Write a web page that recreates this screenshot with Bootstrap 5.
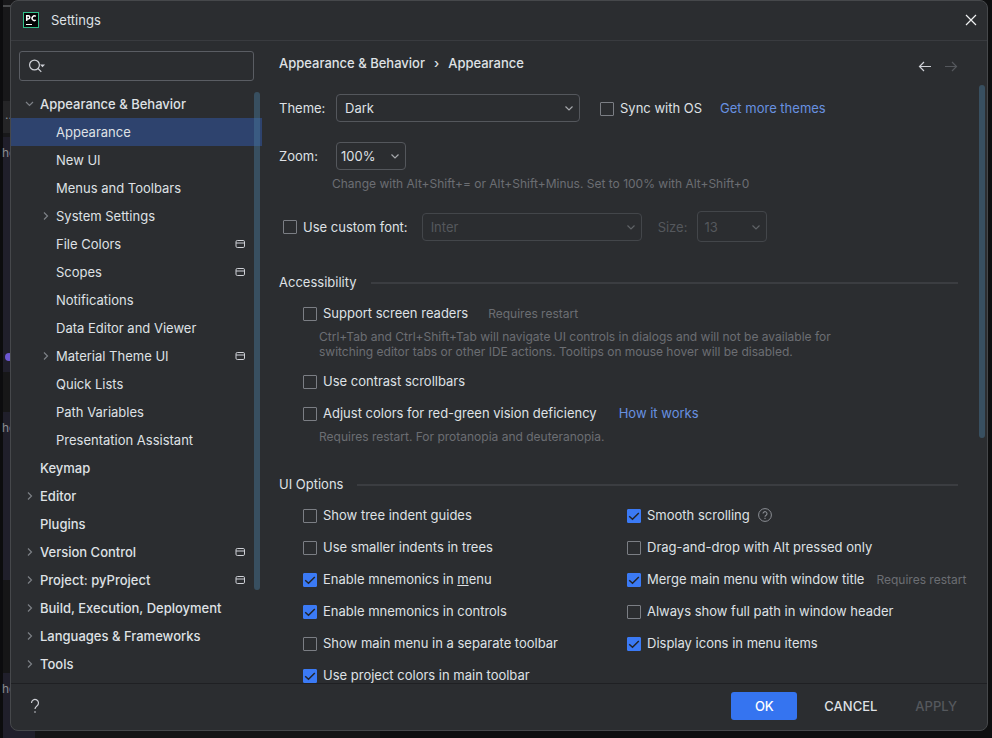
<!DOCTYPE html>
<html lang="en" data-bs-theme="dark">
<head>
<meta charset="utf-8">
<meta name="viewport" content="width=device-width, initial-scale=1">
<title>Settings</title>
<link href="https://cdn.jsdelivr.net/npm/bootstrap@5.3.0/dist/css/bootstrap.min.css" rel="stylesheet">
<style>
  :root { --pane: #2b2d30; --ink: #dfe1e5; --dim: #6b6e73; --off: #55585d; --edge: #54575c; --blue: #3574f0; }
  body {
    font-family: Inter, "Noto Sans", sans-serif; font-size: 13px; line-height: 20px; color: var(--ink);
    background: #0f1012; padding: 0 4px 7px 10px;
  }
  /* editor behind the dialog */
  .desk { inset: 0; z-index: 0;
    background:
      linear-gradient(90deg, #0c0c0e 3px, transparent 3px) 0 0 / 11px 100% no-repeat,
      linear-gradient(#18181a 5px, #4a4b4d 5px 7px, #18181a 7px 101px, #252527 101px 133px, #18181a 133px 137px, #201f2b 137px 372px, #171718 372px 412px, #201f2b 412px 580px, #161617 580px 673px, #201f2b 673px) 0 0 / 35px 100% no-repeat,
      linear-gradient(90deg, #151516 380px, #0e0f10 380px);
    color: #8b8c90; }
  .desk span { left: 2px; position: absolute; font-size: 12px; }
  .desk .dots { left: 5px; }
  .desk .orb { left: 5px; top: 353px; width: 8px; height: 8px; border-radius: 50%; background: #6c57d2; }
  .dialog-frame { z-index: 1; background: var(--pane); border: 1px solid #46484b; border-radius: 8px; height: calc(100vh - 7px); }
  .title-bar { height: 40px; border-bottom: 1px solid #393b3f; padding: 0 10px 2px 12px; }
  .title-bar .caption { padding-left: 12px; }
  .plain { background: none; border: 0; padding: 0; color: inherit; line-height: 0; }
  .side { width: 251px; flex: none; }
  .search { height: 30px; margin: 10px 8px 9px 8px; border: 1px solid #5a5d63; border-radius: 3px; padding-left: 8px; }
  .search input { background: none; border: 0; outline: 0; color: inherit; width: 100%; }
  .tree a { height: 28px; color: var(--ink); text-decoration: none; padding: 0 17px 0 13px; display: flex; align-items: center; }
  .tree .top { font-weight: 500; }
  .tree .sub { padding-left: 29px; }
  .tree .picked { background: #2e436e; }
  .tree .twig { width: 16px; flex: none; line-height: 0; }
  .tree .twig svg { display: block; }
  .thumb { position: absolute; background: rgba(74, 121, 155, .45); border-radius: 3px; width: 6px; }
  .side .thumb { right: 2px; top: 2px; height: 84%; }
  .main .thumb { right: 2px; top: 44px; height: 55%; }
  .main { padding: 12px 29px 0 17px; }
  .crumbs { font-weight: 500; margin-bottom: 21px; }
  .crumb-sep { padding: 0 9px; }
  .nav-arrows { gap: 12px; }
  .field { gap: 12px; }
  .field + .field { margin-top: 20px; }
  .field > .tag { width: 45px; }
  .form-select {
    font-size: 13px; line-height: 20px; height: 28px; padding: 0 24px 0 8px; color: var(--ink);
    background-color: transparent; border: 1px solid var(--edge); border-radius: 4px;
    background-position: right 5px center; background-size: 10px 10px;
    background-image: url("data:image/svg+xml,%3Csvg xmlns='http://www.w3.org/2000/svg' viewBox='0 0 10 10'%3E%3Cpath d='M1.5 3.5 5 7l3.500-3.500' fill='none' stroke='%23a5a7ab' stroke-width='1.200'/%3E%3C/svg%3E");
  }
  .form-select:disabled { background-color: transparent; border-color: #43464a; color: var(--off); opacity: 1;
    background-image: url("data:image/svg+xml,%3Csvg xmlns='http://www.w3.org/2000/svg' viewBox='0 0 10 10'%3E%3Cpath d='M1.5 3.5 5 7l3.500-3.500' fill='none' stroke='%235f6266' stroke-width='1.200'/%3E%3C/svg%3E"); }
  .w-theme { width: 244px; }
  .w-font { width: 220px; }
  .w-small { width: 70px; }
  .zoomer { padding-left: 4px; }
  .tall { height: 31px; padding-left: 6px; }
  .font-row { margin: 20px 0 30px; padding-left: 4px; gap: 14px; }
  .size-tag { color: var(--off); margin: 0 -4px 0 2px; }
  .tick { display: flex; align-items: center; gap: 6px; white-space: nowrap; }
  .tick input { width: 14px; height: 14px; flex: none; margin: 1px 0 0; background-color: transparent; border: 1px solid #7b7e84; }
  .tick input[type=checkbox] { border-radius: 1px; }
  .tick input:checked { background-color: #3b7af5; border-color: #3b7af5; }
  .tick input:checked[type=checkbox] {
    background-size: 14px 14px; background-position: center;
    background-image: url("data:image/svg+xml,%3Csvg xmlns='http://www.w3.org/2000/svg' viewBox='0 0 14 14'%3E%3Cpath d='M2.200 7.200 5.500 10.300 11.800 4' fill='none' stroke='%2322252b' stroke-width='1.500'/%3E%3C/svg%3E"); }
  .opt { height: 32px; display: flex; align-items: center; gap: 20px; }
  .tight { gap: 8px; }
  .near { gap: 12px; }
  .note { font-size: 12px; line-height: 15px; color: var(--dim); }
  .zoom-note { margin-top: 6px; padding-left: 53px; }
  .reader-note { margin-bottom: 6px; }
  .more { color: #6891e0; text-decoration: none; white-space: nowrap; margin-left: 2px; }
  .field .more { margin-left: 6px; }
  .group { gap: 14px; margin-bottom: 5px; font-size: 13px; font-weight: 400; line-height: 20px; color: var(--ink); }
  .group::after { content: ""; flex: 1; height: 2px; margin-top: 2px; background: #3b3d41; }
  .second { margin-top: 30px; }
  .inset { padding-left: 24px; }
  .under { padding-left: 16px; }
  .pair { padding-right: 7px; }
  .bottom { height: 47px; border-top: 1px solid #1f2023; padding: 0 19px 2px 18px; }
  .bottom .btn { font-size: 13px; line-height: 20px; font-weight: 500; height: 28px; padding: 0 11px; border: 0; border-radius: 3px; color: var(--ink); }
  .bottom .btn-primary { width: 66px; background: var(--blue); color: #fff; }
  .bottom .btn:disabled { color: var(--off); opacity: 1; }
</style>
</head>
<body class="overflow-hidden">
<div class="desk position-absolute" aria-hidden="true">
  <span class="orb"></span>
  <span class="dots" style="top:105px">...</span><span style="top:143px">ho</span><span style="top:418px">ho</span><span style="top:679px">ho</span>
</div>

<svg width="0" height="0" class="position-absolute" aria-hidden="true">
  <symbol id="closed" viewBox="0 0 12 12"><path d="M4 2.500 7.500 6 4 9.500" fill="none" stroke="#7d8086" stroke-width="1.200"/></symbol>
  <symbol id="opened" viewBox="0 0 12 12"><path d="M2 4 5.500 7.500 9 4" fill="none" stroke="#7d8086" stroke-width="1.200"/></symbol>
  <symbol id="proj" viewBox="0 0 10 10"><rect x="1" y="1.500" width="8.500" height="7" rx="1.300" fill="none" stroke="#ced0d6"/><path d="M1 4h8.500" stroke="#ced0d6"/></symbol>
</svg>

<div class="dialog-frame position-relative d-flex flex-column overflow-hidden">
  <header class="title-bar d-flex align-items-center flex-shrink-0">
    <svg width="16" height="16" viewBox="0 0 16 16" role="img" aria-label="PyCharm">
      <rect x=".5" y=".5" width="15" height="15" fill="#050505" stroke="#32c08a"/>
      <path d="M3.700 9V3.700h1.500a1.500 1.500 0 0 1 0 3.200H3.900M12.800 4.400A2.300 2.300 0 1 0 12.800 8" fill="none" stroke="#fff" stroke-width="1.500"/>
      <path d="M3 12.500h6" stroke="#fff"/>
    </svg>
    <span class="caption">Settings</span>
    <button type="button" class="plain ms-auto" aria-label="Close">
      <svg width="12" height="12" viewBox="0 0 12 12"><path d="m1 1 10 10M11 1 1 11" stroke="#f0f1f2" stroke-width="1.200"/></svg>
    </button>
  </header>

  <div class="d-flex flex-grow-1 overflow-hidden">
    <aside class="side d-flex flex-column overflow-hidden">
      <label class="search d-flex align-items-center flex-shrink-0">
        <svg width="20" height="16" viewBox="0 0 20 16" class="flex-shrink-0" aria-hidden="true"><circle cx="6.500" cy="7" r="4.900" fill="none" stroke="#ced0d6" stroke-width="1.200"/><path d="m10 10.500 3.300 3.300" stroke="#ced0d6" stroke-width="1.200"/><path d="M12 6.500h5L14.500 9.200z" fill="#ced0d6"/></svg>
        <input type="search" aria-label="Search settings">
      </label>
      <div class="position-relative flex-grow-1 overflow-hidden">
        <nav class="tree" aria-label="Settings categories">
          <a href="#" class="top"><span class="twig"><svg width="12" height="12"><use href="#opened"/></svg></span>Appearance &amp; Behavior</a>
          <a href="#" class="sub picked" aria-current="page"><span class="twig"></span>Appearance</a>
          <a href="#" class="sub"><span class="twig"></span>New UI</a>
          <a href="#" class="sub"><span class="twig"></span>Menus and Toolbars</a>
          <a href="#" class="sub"><span class="twig"><svg width="12" height="12"><use href="#closed"/></svg></span>System Settings</a>
          <a href="#" class="sub"><span class="twig"></span>File Colors<svg class="ms-auto" width="10" height="10"><use href="#proj"/></svg></a>
          <a href="#" class="sub"><span class="twig"></span>Scopes<svg class="ms-auto" width="10" height="10"><use href="#proj"/></svg></a>
          <a href="#" class="sub"><span class="twig"></span>Notifications</a>
          <a href="#" class="sub"><span class="twig"></span>Data Editor and Viewer</a>
          <a href="#" class="sub"><span class="twig"><svg width="12" height="12"><use href="#closed"/></svg></span>Material Theme UI<svg class="ms-auto" width="10" height="10"><use href="#proj"/></svg></a>
          <a href="#" class="sub"><span class="twig"></span>Quick Lists</a>
          <a href="#" class="sub"><span class="twig"></span>Path Variables</a>
          <a href="#" class="sub"><span class="twig"></span>Presentation Assistant</a>
          <a href="#" class="top"><span class="twig"></span>Keymap</a>
          <a href="#" class="top"><span class="twig"><svg width="12" height="12"><use href="#closed"/></svg></span>Editor</a>
          <a href="#" class="top"><span class="twig"></span>Plugins</a>
          <a href="#" class="top"><span class="twig"><svg width="12" height="12"><use href="#closed"/></svg></span>Version Control<svg class="ms-auto" width="10" height="10"><use href="#proj"/></svg></a>
          <a href="#" class="top"><span class="twig"><svg width="12" height="12"><use href="#closed"/></svg></span>Project: pyProject<svg class="ms-auto" width="10" height="10"><use href="#proj"/></svg></a>
          <a href="#" class="top"><span class="twig"><svg width="12" height="12"><use href="#closed"/></svg></span>Build, Execution, Deployment</a>
          <a href="#" class="top"><span class="twig"><svg width="12" height="12"><use href="#closed"/></svg></span>Languages &amp; Frameworks</a>
          <a href="#" class="top"><span class="twig"><svg width="12" height="12"><use href="#closed"/></svg></span>Tools</a>
        </nav>
        <div class="thumb"></div>
      </div>
    </aside>

    <main class="main position-relative flex-grow-1 overflow-hidden">
      <div class="crumbs d-flex">
        <span>Appearance &amp; Behavior</span>
        <span class="crumb-sep">›</span>
        <span>Appearance</span>
        <div class="nav-arrows d-flex ms-auto align-items-end">
          <button type="button" class="plain" aria-label="Back"><svg width="14" height="14" viewBox="0 0 14 14"><path d="M13 7.500H1.500M6 3 1.500 7.500 6 12" fill="none" stroke="#ced0d6" stroke-width="1.200"/></svg></button>
          <button type="button" class="plain" aria-label="Forward" disabled><svg width="14" height="14" viewBox="0 0 14 14"><path d="M1 7.500h11.500M8 3l4.500 4.500L8 12" fill="none" stroke="#54575c" stroke-width="1.200"/></svg></button>
        </div>
      </div>

      <div class="field d-flex align-items-center">
        <label class="tag" for="theme">Theme:</label>
        <select id="theme" class="form-select w-theme"><option>Dark</option></select>
        <label class="tick ms-2"><input class="form-check-input" type="checkbox">Sync with OS</label>
        <a class="more" href="#">Get more themes</a>
      </div>
      <div class="field d-flex align-items-center">
        <label class="tag" for="zoom">Zoom:</label>
        <select id="zoom" class="form-select w-small zoomer"><option>100%</option></select>
      </div>
      <div class="note zoom-note">Change with Alt+Shift+= or Alt+Shift+Minus. Set to 100% with Alt+Shift+0</div>
      <div class="font-row d-flex align-items-center">
        <label class="tick"><input class="form-check-input" type="checkbox">Use custom font:</label>
        <select class="form-select w-font" aria-label="Custom font" disabled><option>Inter</option></select>
        <label class="size-tag" for="size">Size:</label>
        <select id="size" class="form-select w-small tall" disabled><option>13</option></select>
      </div>

      <h2 class="group d-flex align-items-center">Accessibility</h2>
      <div class="inset">
        <div class="opt"><label class="tick"><input class="form-check-input" type="checkbox">Support screen readers</label><span class="note">Requires restart</span></div>
        <div class="note under reader-note">Ctrl+Tab and Ctrl+Shift+Tab will navigate UI controls in dialogs and will not be available for<br>switching editor tabs or other IDE actions. Tooltips on mouse hover will be disabled.</div>
        <div class="opt"><label class="tick"><input class="form-check-input" type="checkbox">Use contrast scrollbars</label></div>
        <div class="opt"><label class="tick"><input class="form-check-input" type="checkbox">Adjust colors for red-green vision deficiency</label><a class="more" href="#">How it works</a></div>
        <div class="note under">Requires restart. For protanopia and deuteranopia.</div>
      </div>

      <h2 class="group second d-flex align-items-center">UI Options</h2>
      <div class="inset pair">
        <div class="row g-0">
          <div class="col-6">
            <div class="opt"><label class="tick"><input class="form-check-input" type="checkbox">Show tree indent guides</label></div>
            <div class="opt"><label class="tick"><input class="form-check-input" type="checkbox">Use smaller indents in trees</label></div>
            <div class="opt"><label class="tick"><input class="form-check-input" type="checkbox" checked><span>Enable mnemonics in <u>m</u>enu</span></label></div>
            <div class="opt"><label class="tick"><input class="form-check-input" type="checkbox" checked>Enable mnemonics in controls</label></div>
            <div class="opt"><label class="tick"><input class="form-check-input" type="checkbox">Show main menu in a separate toolbar</label></div>
            <div class="opt"><label class="tick"><input class="form-check-input" type="checkbox" checked>Use project colors in main toolbar</label></div>
          </div>
          <div class="col-6">
            <div class="opt tight"><label class="tick"><input class="form-check-input" type="checkbox" checked>Smooth scrolling</label>
              <svg width="14" height="14" viewBox="0 0 14 14" role="img" aria-label="Help"><circle cx="7" cy="7" r="6.400" fill="none" stroke="#8b8e94"/><path d="M5 5.600a2 2 0 1 1 3.100 1.700C7.300 7.800 7 8 7 8.800M7 9.800V11" fill="none" stroke="#8b8e94" stroke-width="1.100"/></svg></div>
            <div class="opt"><label class="tick"><input class="form-check-input" type="checkbox">Drag-and-drop with Alt pressed only</label></div>
            <div class="opt near"><label class="tick"><input class="form-check-input" type="checkbox" checked>Merge main menu with window title</label><span class="note text-nowrap">Requires restart</span></div>
            <div class="opt"><label class="tick"><input class="form-check-input" type="checkbox">Always show full path in window header</label></div>
            <div class="opt"><label class="tick"><input class="form-check-input" type="checkbox" checked>Display icons in menu items</label></div>
          </div>
        </div>
      </div>
      <div class="thumb"></div>
    </main>
  </div>

  <footer class="bottom d-flex align-items-center flex-shrink-0">
    <button type="button" class="plain" aria-label="Help"><svg width="12" height="16" viewBox="0 0 12 16"><path d="M2.500 5a3.500 3.500 0 1 1 5.400 2.900C6.700 8.700 6 9.300 6 11M6 13.200v1.500" fill="none" stroke="#ced0d6" stroke-width="1.200"/></svg></button>
    <div class="d-flex ms-auto gap-3">
      <button type="button" class="btn btn-primary">OK</button>
      <button type="button" class="btn">CANCEL</button>
      <button type="button" class="btn" disabled>APPLY</button>
    </div>
  </footer>
</div>
<script src="https://cdn.jsdelivr.net/npm/bootstrap@5.3.0/dist/js/bootstrap.bundle.min.js"></script>
</body>
</html>
